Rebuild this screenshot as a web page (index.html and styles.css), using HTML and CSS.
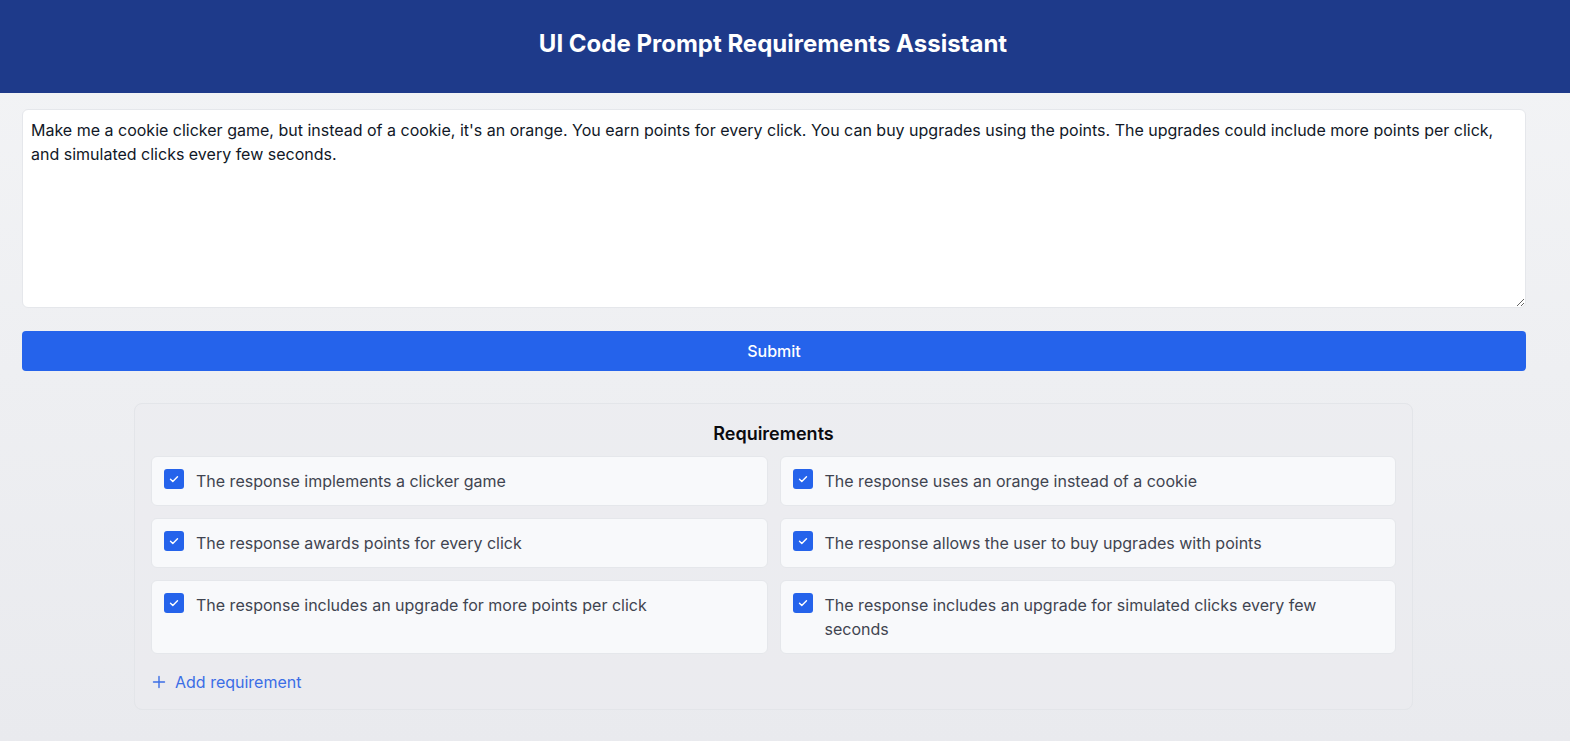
FILE: index.html
```html
<!DOCTYPE html>
<html lang="en">
<head>
<meta charset="utf-8">
<title>UI Code Prompt Requirements Assistant</title>
<link rel="stylesheet" href="styles.css">
</head>
<body>
<header class="topbar">
  <h1 class="title">UI Code Prompt Requirements Assistant</h1>
</header>
<main class="main">
  <textarea class="prompt">Make me a cookie clicker game, but instead of a cookie, it's an orange. You earn points for every click. You can buy upgrades using the points. The upgrades could include more points per click, and simulated clicks every few seconds.</textarea>
  <button class="submit" type="button">Submit</button>
  <section class="card">
    <h2 class="card-title">Requirements</h2>
    <div class="grid">
      <div class="item"><span class="check"><svg viewBox="0 0 20 20" width="20" height="20"><path d="M6.5 10.2l2.3 2.3 4.7-4.8" fill="none" stroke="#fff" stroke-width="1.4" stroke-linecap="round" stroke-linejoin="round"/></svg></span><span class="text">The response implements a clicker game</span></div>
      <div class="item"><span class="check"><svg viewBox="0 0 20 20" width="20" height="20"><path d="M6.5 10.2l2.3 2.3 4.7-4.8" fill="none" stroke="#fff" stroke-width="1.4" stroke-linecap="round" stroke-linejoin="round"/></svg></span><span class="text">The response uses an orange instead of a cookie</span></div>
      <div class="item"><span class="check"><svg viewBox="0 0 20 20" width="20" height="20"><path d="M6.5 10.2l2.3 2.3 4.7-4.8" fill="none" stroke="#fff" stroke-width="1.4" stroke-linecap="round" stroke-linejoin="round"/></svg></span><span class="text">The response awards points for every click</span></div>
      <div class="item"><span class="check"><svg viewBox="0 0 20 20" width="20" height="20"><path d="M6.5 10.2l2.3 2.3 4.7-4.8" fill="none" stroke="#fff" stroke-width="1.4" stroke-linecap="round" stroke-linejoin="round"/></svg></span><span class="text">The response allows the user to buy upgrades with points</span></div>
      <div class="item"><span class="check"><svg viewBox="0 0 20 20" width="20" height="20"><path d="M6.5 10.2l2.3 2.3 4.7-4.8" fill="none" stroke="#fff" stroke-width="1.4" stroke-linecap="round" stroke-linejoin="round"/></svg></span><span class="text">The response includes an upgrade for more points per click</span></div>
      <div class="item"><span class="check"><svg viewBox="0 0 20 20" width="20" height="20"><path d="M6.5 10.2l2.3 2.3 4.7-4.8" fill="none" stroke="#fff" stroke-width="1.4" stroke-linecap="round" stroke-linejoin="round"/></svg></span><span class="text">The response includes an upgrade for simulated clicks every few seconds</span></div>
    </div>
    <button class="add" type="button"><svg viewBox="0 0 16 16" width="16" height="16"><path d="M8 2.5v11M2.5 8h11" fill="none" stroke="currentColor" stroke-width="1.4" stroke-linecap="round"/></svg><span>Add requirement</span></button>
  </section>
</main>
</body>
</html>
```
FILE: styles.css
```css
* { box-sizing: border-box; }
html, body { margin: 0; padding: 0; }
body {
  font-family: Inter, "Noto Sans", "Liberation Sans", sans-serif;
  font-size: 16px;
  line-height: 24px;
  color: #111827;
  min-height: 741px;
  background: linear-gradient(to bottom, #f3f4f6 0%, #e9eaee 100%);
}
.topbar {
  background: #1e3a8a;
  height: 93px;
  padding: 28px 24px 0 0;
}
.title {
  margin: 0;
  text-align: center;
  color: #ffffff;
  font-size: 24px;
  line-height: 32px;
  font-weight: 700;
}
.main {
  padding: 16px 44px 32px 22px;
  display: flex;
  flex-direction: column;
}
.prompt {
  display: block;
  width: 100%;
  height: 199px;
  margin: 0 0 23px;
  padding: 8px 8px;
  border: 1px solid #e5e7eb;
  border-radius: 6px;
  background: #ffffff;
  font-family: Inter, "Noto Sans", "Liberation Sans", sans-serif;
  font-size: 16px;
  line-height: 24px;
  color: #111827;
  resize: vertical;
  outline: none;
}
.submit {
  display: block;
  width: 100%;
  height: 40px;
  border: none;
  border-radius: 4px;
  background: #2563eb;
  color: #ffffff;
  font-family: Inter, "Noto Sans", "Liberation Sans", sans-serif;
  font-size: 16px;
  font-weight: 500;
  margin: 0 0 32px;
  cursor: pointer;
}
.card {
  width: 1279px;
  max-width: 100%;
  margin: 0 auto 0 112px;
  border: 1px solid #e3e5e9;
  border-radius: 8px;
  background: rgba(235, 236, 240, 0.5);
  padding: 16px 16px 15px;
}
.card-title {
  margin: 0 0 8px;
  text-align: center;
  font-size: 18px;
  line-height: 28px;
  font-weight: 600;
  color: #0b0b0f;
}
.grid {
  display: grid;
  grid-template-columns: 1fr 1fr;
  gap: 12px 12px;
}
.item {
  display: flex;
  align-items: flex-start;
  gap: 12px;
  padding: 12px;
  background: #f8f9fb;
  border: 1px solid #e5e7eb;
  border-radius: 6px;
}
.check {
  flex: 0 0 20px;
  width: 20px;
  height: 20px;
  border-radius: 3px;
  background: #2563eb;
  display: flex;
}
.text {
  color: #3f4450;
  font-size: 16px;
  line-height: 24px;
}
.add {
  margin-top: 16px;
  display: flex;
  align-items: center;
  gap: 8px;
  padding: 0;
  border: none;
  background: transparent;
  color: #3b6ee6;
  font-family: Inter, "Noto Sans", "Liberation Sans", sans-serif;
  font-size: 16px;
  line-height: 24px;
  cursor: pointer;
}
```
